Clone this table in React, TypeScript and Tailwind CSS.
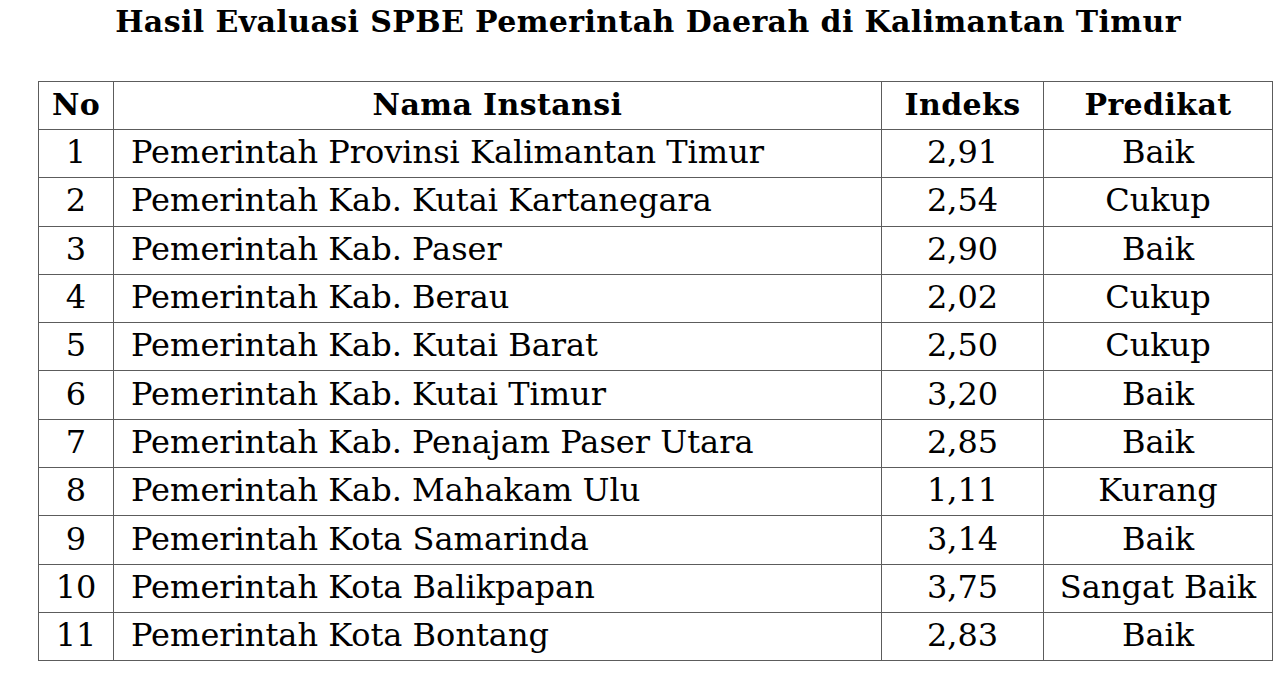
import React from 'react';

interface Row {
  no: number;
  nama: string;
  indeks: string;
  predikat: string;
}

const rows: Row[] = [
  { no: 1, nama: 'Pemerintah Provinsi Kalimantan Timur', indeks: '2,91', predikat: 'Baik' },
  { no: 2, nama: 'Pemerintah Kab. Kutai Kartanegara', indeks: '2,54', predikat: 'Cukup' },
  { no: 3, nama: 'Pemerintah Kab. Paser', indeks: '2,90', predikat: 'Baik' },
  { no: 4, nama: 'Pemerintah Kab. Berau', indeks: '2,02', predikat: 'Cukup' },
  { no: 5, nama: 'Pemerintah Kab. Kutai Barat', indeks: '2,50', predikat: 'Cukup' },
  { no: 6, nama: 'Pemerintah Kab. Kutai Timur', indeks: '3,20', predikat: 'Baik' },
  { no: 7, nama: 'Pemerintah Kab. Penajam Paser Utara', indeks: '2,85', predikat: 'Baik' },
  { no: 8, nama: 'Pemerintah Kab. Mahakam Ulu', indeks: '1,11', predikat: 'Kurang' },
  { no: 9, nama: 'Pemerintah Kota Samarinda', indeks: '3,14', predikat: 'Baik' },
  { no: 10, nama: 'Pemerintah Kota Balikpapan', indeks: '3,75', predikat: 'Sangat Baik' },
  { no: 11, nama: 'Pemerintah Kota Bontang', indeks: '2,83', predikat: 'Baik' },
];

export default function App() {
  return (
    <div className="w-[1280px] h-[674px] bg-white text-black font-['DejaVu_Serif',serif] overflow-hidden">
      {/* Judul */}
      <h1 className="pt-[4px] pl-[16px] text-center text-[30px] leading-[36px] tracking-[0.4px] font-bold whitespace-nowrap">
        Hasil Evaluasi SPBE Pemerintah Daerah di Kalimantan Timur
      </h1>

      <table className="mt-[41px] ml-[38px] w-[1234px] border-collapse table-fixed text-[32px] leading-[40px]">
        <colgroup>
          <col className="w-[75px]" />
          <col className="w-[768px]" />
          <col className="w-[162px]" />
          <col className="w-[229px]" />
        </colgroup>
        <thead>
          <tr className="h-[48px] font-bold text-[30px] tracking-[0.4px]">
            <th className="border border-[#5c5c5c] text-center px-0 pt-0 pb-[2px]">No</th>
            <th className="border border-[#5c5c5c] text-center px-0 pt-0 pb-[2px]">Nama Instansi</th>
            <th className="border border-[#5c5c5c] text-center px-0 pt-0 pb-[2px]">Indeks</th>
            <th className="border border-[#5c5c5c] text-center px-0 pt-0 pb-[2px]">Predikat</th>
          </tr>
        </thead>
        <tbody>
          {rows.map((r) => (
            <tr key={r.no} className="h-[48.3px]">
              <td className="border border-[#5c5c5c] text-center px-0 pt-0 pb-[3px]">{r.no}</td>
              <td className="border border-[#5c5c5c] pl-[17px] pt-0 pb-[3px] whitespace-nowrap">{r.nama}</td>
              <td className="border border-[#5c5c5c] text-center px-0 pt-0 pb-[3px]">{r.indeks}</td>
              <td className="border border-[#5c5c5c] text-center px-0 pt-0 pb-[3px] whitespace-nowrap">{r.predikat}</td>
            </tr>
          ))}
        </tbody>
      </table>
    </div>
  );
}
